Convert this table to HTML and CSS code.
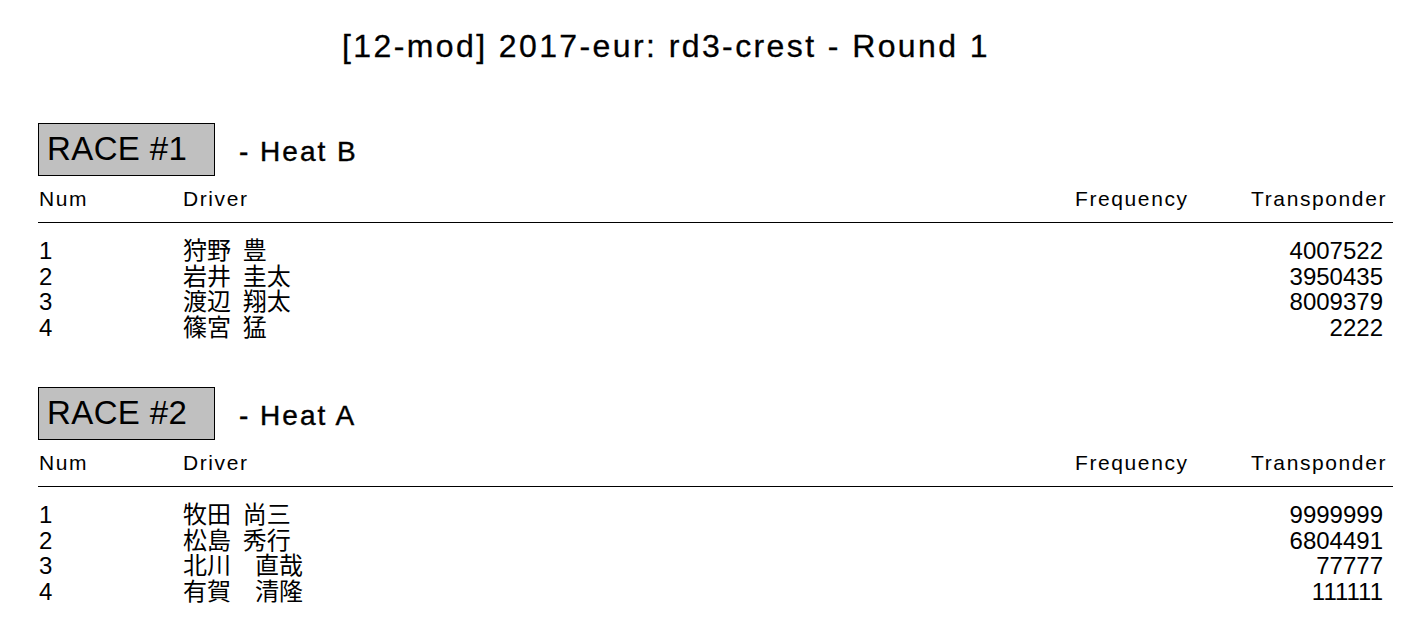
FILE: index.html
```html
<!DOCTYPE html>
<html lang="ja">
<head>
<meta charset="utf-8">
<title>[12-mod] 2017-eur: rd3-crest - Round 1</title>
<link rel="stylesheet" href="styles.css">
</head>
<body>
<h1 class="title">[12-mod] 2017-eur: rd3-crest - Round 1</h1>

<section class="race">
  <div class="race-head">
    <div class="race-box">RACE #1</div>
    <div class="heat">- Heat B</div>
  </div>
  <div class="grid head-row">
    <div>Num</div><div>Driver</div><div>Frequency</div><div class="tp">Transponder</div>
  </div>
  <div class="grid rows">
    <div>1</div><div class="name">狩野 豊</div><div></div><div class="tp">4007522</div>
    <div>2</div><div class="name">岩井 圭太</div><div></div><div class="tp">3950435</div>
    <div>3</div><div class="name">渡辺 翔太</div><div></div><div class="tp">8009379</div>
    <div>4</div><div class="name">篠宮 猛</div><div></div><div class="tp">2222</div>
  </div>
</section>

<section class="race">
  <div class="race-head">
    <div class="race-box">RACE #2</div>
    <div class="heat">- Heat A</div>
  </div>
  <div class="grid head-row">
    <div>Num</div><div>Driver</div><div>Frequency</div><div class="tp">Transponder</div>
  </div>
  <div class="grid rows">
    <div>1</div><div class="name">牧田 尚三</div><div></div><div class="tp">9999999</div>
    <div>2</div><div class="name">松島 秀行</div><div></div><div class="tp">6804491</div>
    <div>3</div><div class="name">北川　直哉</div><div></div><div class="tp">77777</div>
    <div>4</div><div class="name">有賀　清隆</div><div></div><div class="tp">111111</div>
  </div>
</section>
</body>
</html>
```

FILE: styles.css
```css
html, body {
  margin: 0;
  padding: 0;
  background: #fff;
  color: #000;
}

body {
  font-family: "Liberation Sans", "Noto Sans CJK JP", sans-serif;
}

.title {
  margin: 0;
  padding: 28px 0 0 342px;
  font-size: 32px;
  font-weight: normal;
  letter-spacing: 2.4px;
  line-height: 36px;
  height: 59px;
  -webkit-text-stroke: 0.3px #000;
}

.race {
  margin: 36px 26px 0 38px;
}

.race + .race {
  margin-top: 47px;
}

.race-head {
  display: flex;
  align-items: center;
  gap: 24px;
}

.race-box {
  box-sizing: border-box;
  width: 177px;
  height: 53px;
  padding: 6px 0 0 8px;
  background: #c0c0c0;
  border: 1px solid #000;
  font-size: 33px;
  letter-spacing: 0.4px;
  line-height: 38px;
}

.heat {
  font-size: 28px;
  letter-spacing: 2px;
  padding-top: 4px;
  -webkit-text-stroke: 0.4px #000;
}

.grid {
  display: grid;
  grid-template-columns: 144px 892px 140px 1fr;
}

.head-row {
  font-size: 21px;
  letter-spacing: 1.6px;
  line-height: 28px;
  padding: 9px 0 9px 1px;
  border-bottom: 1px solid #000;
}

.head-row .tp {
  padding-right: 6px;
}

.rows {
  font-size: 24px;
  line-height: 25.5px;
  padding: 15px 0 0 1px;
}

.name {
  word-spacing: 5px;
}

.tp {
  text-align: right;
  padding-right: 10px;
}
```
